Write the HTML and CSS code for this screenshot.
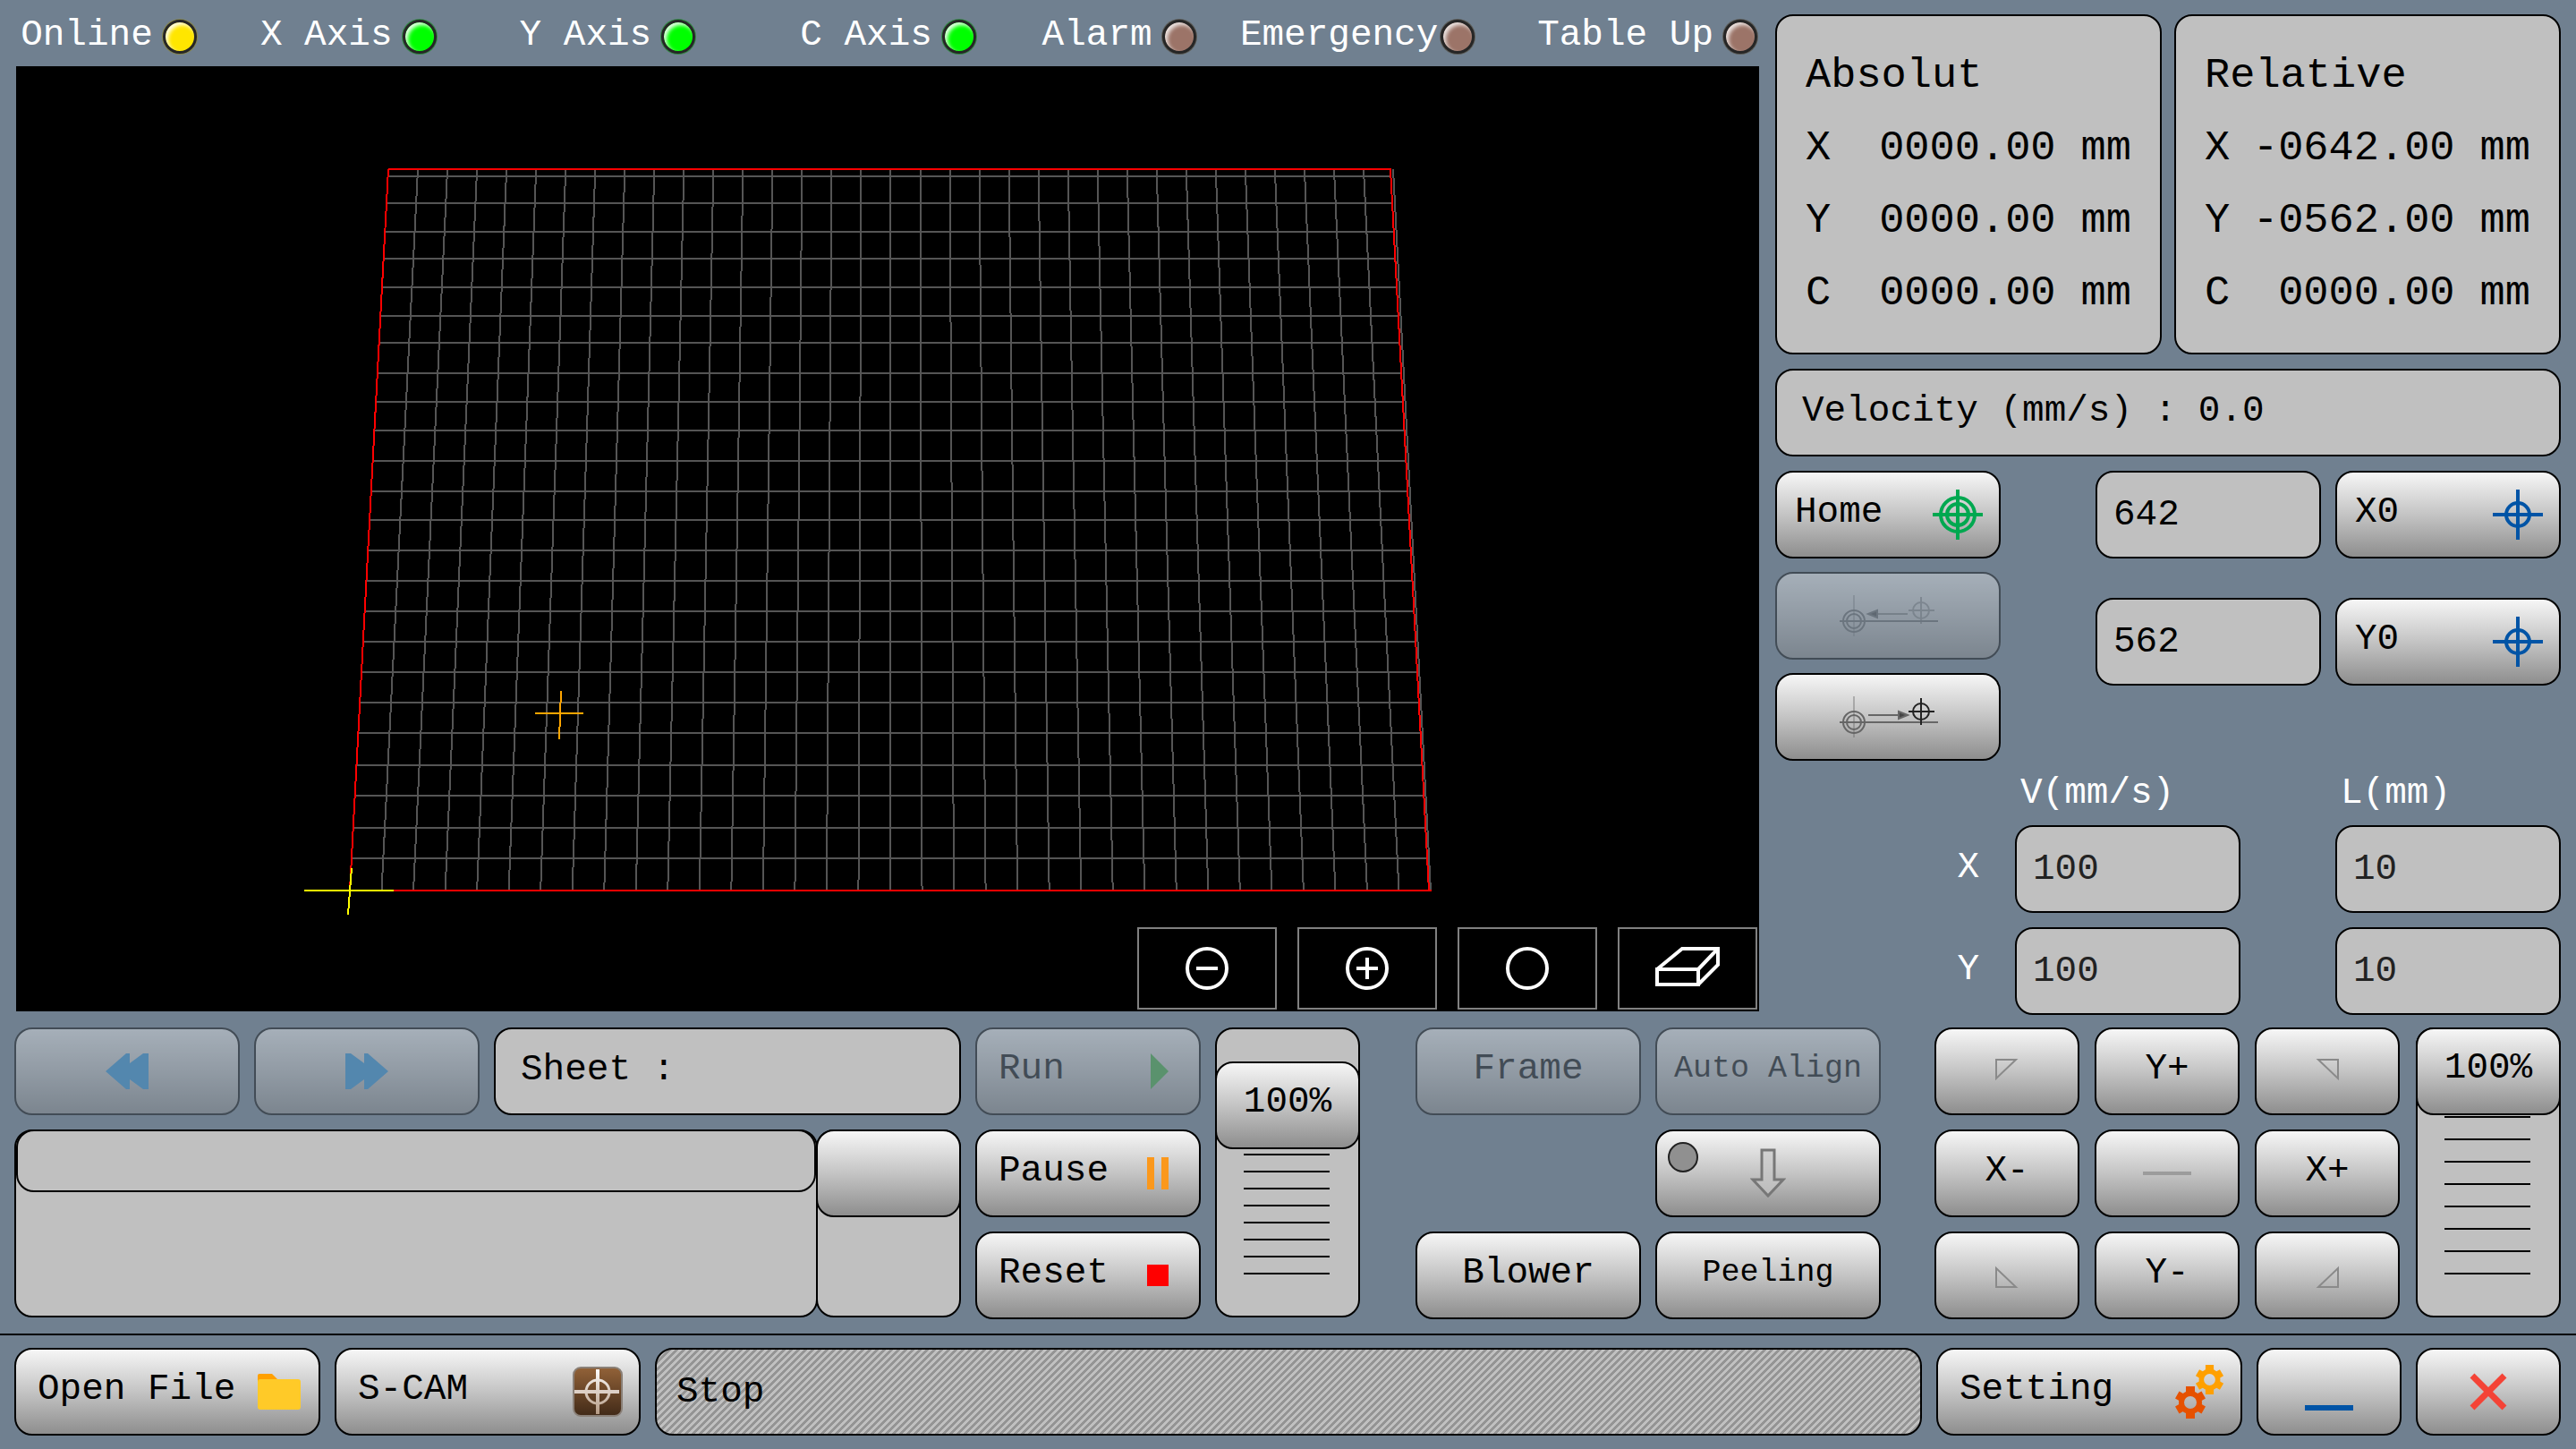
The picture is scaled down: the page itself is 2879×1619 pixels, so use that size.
FILE: index.html
```
<!DOCTYPE html>
<html lang="en">

<head>
	<meta charset="UTF-8">
	<meta name="viewport" content="width=device-width, initial-scale=1.0">
	<title>Cutter Control</title>
	<link rel="stylesheet" href="styles.css">
</head>

<body>
	<!-- shared icons -->
	<svg class="defs" aria-hidden="true">
		<symbol id="target" viewBox="0 0 56 56">
			<path d="M28 0V56M0 28H56" />
			<circle cx="28" cy="28" r="13" />
		</symbol>
		<symbol id="gear" viewBox="-18 -18 36 36">
			<circle r="10" fill="none" stroke="currentColor" stroke-width="6" />
			<path d="M0-18V-10M0 18V10" stroke="currentColor" stroke-width="10" />
			<path d="M0-17V-10M0 17V10" stroke="currentColor" stroke-width="9" transform="rotate(60)" />
			<path d="M0-17V-10M0 17V10" stroke="currentColor" stroke-width="9" transform="rotate(120)" />
		</symbol>
	</svg>

	<main class="main">
		<section class="left">
			<div class="status">
				<div class="status-item"><span>Online</span><i class="led yellow"></i></div>
				<div class="status-item"><span>X Axis</span><i class="led green"></i></div>
				<div class="status-item"><span>Y Axis</span><i class="led green"></i></div>
				<div class="status-item"><span>C Axis</span><i class="led green"></i></div>
				<div class="status-item"><span>Alarm</span><i class="led"></i></div>
				<div class="status-item tight"><span>Emergency</span><i class="led"></i></div>
				<div class="status-item"><span>Table Up</span><i class="led"></i></div>
			</div>
			<div class="view">
				<svg class="table-view" viewBox="0 0 1948 1056" aria-label="Cutting table">
					<path id="gridLines" stroke="#555" />
					<path d="M416 115H1536L1579 921" stroke="#f00" />
					<path d="M416 115L373 921H1582" stroke="#f00" />
					<path d="M322 921H422M375 896L371 948" stroke="#ff0" />
					<path d="M580 723H634M609 698L607 752" stroke="#ffa500" />
				</svg>
				<div class="tools">
					<button type="button" class="tool" aria-label="Zoom out">
						<svg width="48" height="48" viewBox="0 0 48 48"><circle cx="24" cy="24" r="22" /><path d="M12 24H36" /></svg>
					</button>
					<button type="button" class="tool" aria-label="Zoom in">
						<svg width="48" height="48" viewBox="0 0 48 48"><circle cx="24" cy="24" r="22" /><path d="M12 24H36M24 12V36" /></svg>
					</button>
					<button type="button" class="tool" aria-label="Fit">
						<svg width="48" height="48" viewBox="0 0 48 48"><circle cx="24" cy="24" r="22" /></svg>
					</button>
					<button type="button" class="tool" aria-label="Erase">
						<svg width="72" height="48" viewBox="0 0 72 48"><path d="M2 25H48V42H2ZM2 25L30 2H70L48 25M70 2V20L48 42" /></svg>
					</button>
				</div>
			</div>
		</section>

		<section class="right">
			<div class="readouts">
				<table class="panel readout">
					<caption>Absolut</caption>
					<tr><th>X</th><td>0000.00</td><td class="unit">mm</td></tr>
					<tr><th>Y</th><td>0000.00</td><td class="unit">mm</td></tr>
					<tr><th>C</th><td>0000.00</td><td class="unit">mm</td></tr>
				</table>
				<table class="panel readout">
					<caption>Relative</caption>
					<tr><th>X</th><td>-0642.00</td><td class="unit">mm</td></tr>
					<tr><th>Y</th><td>-0562.00</td><td class="unit">mm</td></tr>
					<tr><th>C</th><td>0000.00</td><td class="unit">mm</td></tr>
				</table>
			</div>
			<div class="panel info">Velocity (mm/s) : 0.0</div>

			<div class="moves">
				<div class="move-col">
					<button type="button" class="btn">
						<span>Home</span>
						<svg class="home-icon" width="56" height="56" viewBox="0 0 56 56"><path d="M28 0V56M0 28H56" /><circle cx="28" cy="28" r="19" /><circle cx="28" cy="28" r="12" /></svg>
					</button>
					<button type="button" class="btn center" disabled aria-label="Go back to origin">
						<svg class="move-icon" width="116" height="46" viewBox="-4 0 116 46">
							<path d="M16 0V46" opacity=".4" /><path d="M0 29H110" />
							<circle cx="16" cy="29" r="12" /><circle cx="16" cy="29" r="8" />
							<path d="M42 21H76" opacity=".7" /><path class="head" d="M32 21L42 17V25Z" />
							<g opacity=".6"><circle cx="91" cy="17" r="9" /><path d="M91 2V32M77 17H106" /></g>
						</svg>
					</button>
					<button type="button" class="btn center" aria-label="Go to point">
						<svg class="move-icon" width="116" height="46" viewBox="-4 0 116 46">
							<path d="M16 0V46" opacity=".4" /><path d="M0 29H110" />
							<circle cx="16" cy="29" r="12" /><circle cx="16" cy="29" r="8" />
							<path d="M32 21H66" /><path class="head" d="M76 21L66 17V25Z" />
							<g stroke="#222"><circle cx="91" cy="17" r="9" /><path d="M91 2V32M77 17H106" /></g>
						</svg>
					</button>
				</div>
				<div class="origin-col">
					<input class="field" type="text" value="642" aria-label="X origin">
					<button type="button" class="btn"><span>X0</span><svg class="set-icon" width="56" height="56"><use href="#target" /></svg></button>
					<input class="field" type="text" value="562" aria-label="Y origin">
					<button type="button" class="btn"><span>Y0</span><svg class="set-icon" width="56" height="56"><use href="#target" /></svg></button>
				</div>
			</div>

			<div class="steps">
				<span></span><span class="steps-head">V(mm/s)</span><span class="steps-head">L(mm)</span>
				<label for="vx">X</label>
				<input class="field" id="vx" type="text" value="100">
				<input class="field" type="text" value="10" aria-label="X length">
				<label for="vy">Y</label>
				<input class="field" id="vy" type="text" value="100">
				<input class="field" type="text" value="10" aria-label="Y length">
			</div>
		</section>
	</main>

	<section class="controls">
		<div class="sheet">
			<div class="sheet-top">
				<button type="button" class="btn center" disabled aria-label="Previous">
					<svg width="48" height="40" viewBox="0 0 48 40"><path d="M0 20L23 0H27V11L42 0H48V40H42L27 29V40H23Z" fill="#2a92dc" /></svg>
				</button>
				<button type="button" class="btn center" disabled aria-label="Next">
					<svg width="48" height="40" viewBox="0 0 48 40"><path d="M48 20L25 0H21V11L6 0H0V40H6L21 29V40H25Z" fill="#2a92dc" /></svg>
				</button>
				<div class="panel info">Sheet :</div>
			</div>
			<div class="sheet-list">
				<div class="panel list"><div class="panel list-row"></div></div>
				<div class="panel slider scroll">
					<input type="range" min="0" max="100" value="100" aria-label="Scroll">
				</div>
			</div>
		</div>

		<div class="run-col">
			<button type="button" class="btn" disabled><span>Run</span><svg width="24" height="40" viewBox="0 0 24 40"><path d="M4 0L24 20L4 40Z" fill="#3aae3a" /></svg></button>
			<button type="button" class="btn"><span>Pause</span><svg width="24" height="36" viewBox="0 0 24 36"><path d="M0 0H8V36H0ZM16 0H24V36H16Z" fill="#fb981c" /></svg></button>
			<button type="button" class="btn"><span>Reset</span><svg width="24" height="24" viewBox="0 0 24 24"><path d="M0 0H24V24H0Z" fill="#f00" /></svg></button>
		</div>

		<div class="panel slider work">
			<div class="ticks"></div>
			<input id="workSpeed" type="range" min="0" max="120" value="100" aria-label="Work speed">
			<output for="workSpeed">100%</output>
		</div>

		<div class="actions">
			<button type="button" class="btn center" disabled><span>Frame</span></button>
			<button type="button" class="btn center small" disabled><span>Auto Align</span></button>
			<span></span>
			<button type="button" class="btn center" aria-label="Tool down">
				<i class="lamp"></i>
				<svg width="40" height="56" viewBox="0 0 40 56"><path d="M13 2H27V35H37L20 53L3 35H13Z" fill="#c8c8c8" fill-opacity=".6" stroke="#777" stroke-width="3" /></svg>
			</button>
			<button type="button" class="btn center"><span>Blower</span></button>
			<button type="button" class="btn center small"><span>Peeling</span></button>
		</div>

		<div class="jog">
			<button type="button" class="btn center" aria-label="X- Y+"><svg class="corner" width="28" height="28"><path d="M2 1H24L2 22Z" /></svg></button>
			<button type="button" class="btn center"><span>Y+</span></button>
			<button type="button" class="btn center" aria-label="X+ Y+"><svg class="corner" width="28" height="28"><path d="M26 1H4L26 22Z" /></svg></button>
			<button type="button" class="btn center"><span>X-</span></button>
			<button type="button" class="btn center" aria-label="Centre"><svg width="54" height="4"><path d="M0 0H54V4H0Z" fill="#9c9c9c" /></svg></button>
			<button type="button" class="btn center"><span>X+</span></button>
			<button type="button" class="btn center" aria-label="X- Y-"><svg class="corner" width="28" height="28"><path d="M2 6V27H24Z" /></svg></button>
			<button type="button" class="btn center"><span>Y-</span></button>
			<button type="button" class="btn center" aria-label="X+ Y-"><svg class="corner" width="28" height="28"><path d="M26 6V27H4Z" /></svg></button>
		</div>

		<div class="panel slider travel">
			<div class="ticks"></div>
			<input id="travelSpeed" type="range" min="0" max="100" value="100" aria-label="Travel speed">
			<output for="travelSpeed">100%</output>
		</div>
	</section>

	<footer class="footer">
		<button type="button" class="btn">
			<span>Open File</span>
			<svg width="50" height="40" viewBox="0 0 50 40"><path d="M0 2Q0 0 2 0H16L22 6V20H0Z" fill="#ffa000" /><rect y="6" width="48" height="34" rx="3" fill="#ffca28" /></svg>
		</button>
		<button type="button" class="btn">
			<span>S-CAM</span>
			<svg width="56" height="56" viewBox="0 0 56 56">
				<defs>
					<linearGradient id="brown" x2="0" y2="1"><stop stop-color="#926238" /><stop offset="1" stop-color="#412a18" /></linearGradient>
					<linearGradient id="cream" gradientUnits="userSpaceOnUse" x1="0" y1="2" x2="0" y2="54"><stop stop-color="#fff" /><stop offset="1" stop-color="#b39780" /></linearGradient>
				</defs>
				<rect x="1" y="1" width="54" height="54" rx="8" fill="url(#brown)" stroke="#8a8078" stroke-width="2" />
				<g fill="none" stroke="url(#cream)"><path d="M28 3V53" stroke-width="4" /><circle cx="28" cy="28" r="13" stroke-width="3" /></g>
				<path d="M2 28H52" stroke="#ddd0c6" stroke-width="4" />
			</svg>
		</button>
		<div class="panel message">Stop</div>
		<button type="button" class="btn">
			<span>Setting</span>
			<svg width="56" height="60" viewBox="0 0 56 60">
				<use href="#gear" x="23" y="0" width="33" height="33" color="#ffa000" />
				<use href="#gear" x="0" y="24" width="36" height="36" color="#e65100" />
			</svg>
		</button>
		<button type="button" class="btn center" aria-label="Minimize"><svg width="54" height="42" viewBox="0 0 54 42"><path d="M0 36H54V42H0Z" fill="#0054a6" /></svg></button>
		<button type="button" class="btn center" aria-label="Close"><svg width="44" height="44" viewBox="0 0 44 44"><path d="M4 4L40 40M40 4L4 40" stroke="#f44336" stroke-width="7" /></svg></button>
	</footer>

	<script>
		// table corners in view coordinates
		const top0 = 115, bottom0 = 921;
		const cols = 34;
		const rows = [123, 153, 185, 215, 247, 279, 309, 343, 375, 407, 441, 475, 507, 541, 575, 609, 643, 677, 711, 745, 781, 815, 851, 885];

		// x on the slanted side that runs from a (top) to b (bottom)
		function sideX(a, b, y) {
			return a + (b - a) * (y - top0) / (bottom0 - top0);
		}

		let d = '';
		for (let i = 1; i <= cols; i++) {
			d += 'M' + (416 + i * 1123 / cols) + ' ' + top0 + 'L' + (373 + i * 1208 / cols) + ' ' + bottom0;
		}
		rows.forEach(function (y) {
			d += 'M' + sideX(416, 373, y) + ' ' + y + 'H' + sideX(1536, 1579, y);
		});
		document.getElementById('gridLines').setAttribute('d', d);
	</script>
</body>

</html>
```
FILE: styles.css
```
* {
	margin: 0;
	padding: 0;
	box-sizing: border-box;
}

body {
	display: flex;
	flex-direction: column;
	min-height: 100vh;
	font-family: "Courier New", "Liberation Mono", monospace;
	font-size: 41px;
	color: #000;
	background: #708090;
}

button,
input {
	font: inherit;
	color: inherit;
}

.defs {
	display: none;
}

.panel {
	border: 2px solid #000;
	border-radius: 20px;
	background: #c0c0c0;
}

.btn {
	position: relative;
	display: flex;
	align-items: center;
	justify-content: space-between;
	min-width: 0;
	height: 98px;
	padding: 0 18px 0 20px;
	border: 2px solid #000;
	border-radius: 20px;
	background: linear-gradient(#f6f6f6, #c4c4c4 50%, #8e8e8e);
	white-space: nowrap;
	cursor: pointer;
}

.btn span {
	padding-bottom: 6px;
}

.btn.center {
	justify-content: center;
	padding: 0;
}

.btn.small {
	font-size: 35px;
}

.btn:disabled {
	opacity: .4;
	cursor: default;
}

.field {
	width: 100%;
	height: 98px;
	padding: 0 18px;
	border: 2px solid #000;
	border-radius: 20px;
	background: #c0c0c0;
	outline: none;
}

.info {
	height: 98px;
	padding: 0 28px;
	line-height: 90px;
}

/* top part */
.main {
	display: grid;
	grid-template-columns: 1948fr 878fr;
	gap: 18px;
	flex: 1;
	padding: 0 17px 0 18px;
}

.left {
	display: flex;
	flex-direction: column;
	padding-bottom: 4px;
}

.status {
	display: grid;
	grid-template-columns: 202fr 268fr 290fr 314fr 246fr 312fr 316fr;
	height: 74px;
	padding: 8px 2px 0 0;
	color: #fff;
}

.status-item {
	display: flex;
	align-items: center;
	justify-content: flex-end;
	gap: 11px;
}

.status-item.tight {
	gap: 3px;
}

.status-item span {
	padding-bottom: 4px;
}

.led {
	width: 38px;
	height: 38px;
	border: 3px solid #262626;
	border-radius: 50%;
	background: #9c7468;
	box-shadow: inset 3px 3px 4px rgba(255, 255, 255, .8), 0 0 0 1px #5c5c58;
}

.led.yellow {
	background: #ffe600;
	box-shadow: inset 3px 3px 4px rgba(255, 255, 255, .9), 0 0 0 1px #85854e;
}

.led.green {
	background: #0f0;
	box-shadow: inset 3px 3px 4px rgba(255, 255, 255, .9), 0 0 0 1px #358a48;
}

.view {
	position: relative;
	flex: 1;
	background: #000;
}

.table-view {
	display: block;
	width: 100%;
	height: 100%;
	fill: none;
	stroke-width: 2;
	shape-rendering: crispEdges;
}

.tools {
	position: absolute;
	right: 2px;
	bottom: 2px;
	display: flex;
	gap: 23px;
}

.tool {
	display: flex;
	align-items: center;
	justify-content: center;
	width: 156px;
	height: 92px;
	border: 2px solid #808080;
	background: #000;
	cursor: pointer;
}

.tool svg {
	fill: none;
	stroke: #fff;
	stroke-width: 4;
}

.right {
	display: flex;
	flex-direction: column;
	gap: 16px;
	padding-top: 16px;
}

.readouts {
	display: grid;
	grid-template-columns: 1fr 1fr;
	gap: 14px;
}

.readout {
	display: block;
	padding: 26px 32px;
	font-size: 47px;
	line-height: 81px;
}

.readout caption {
	display: block;
	text-align: left;
}

.readout tbody {
	display: block;
}

.readout tr {
	display: flex;
}

.readout th {
	flex: 1;
	font-weight: normal;
	text-align: left;
}

.readout .unit {
	padding-left: 28px;
}

.moves {
	display: grid;
	grid-template-columns: 252fr 520fr;
	gap: 106px;
}

.move-col {
	display: grid;
	gap: 15px;
}

.origin-col {
	display: grid;
	grid-template-columns: 1fr 1fr;
	align-content: start;
	gap: 44px 16px;
}

.home-icon,
.set-icon,
.move-icon,
.corner {
	fill: none;
	stroke-width: 4;
}

.home-icon {
	stroke: #00a850;
}

.set-icon {
	stroke: #0054a6;
}

.move-icon {
	stroke: #666;
	stroke-width: 2;
}

.move-icon .head {
	fill: #444;
}

.corner {
	stroke: #8a8a8a;
	stroke-width: 2;
}

.steps {
	display: grid;
	grid-template-columns: 162fr 252fr 252fr;
	gap: 16px 106px;
	align-items: center;
	margin-top: -16px;
	color: #fff;
}

.steps label {
	text-align: right;
	margin-right: -66px;
	padding-bottom: 4px;
}

.steps-head {
	height: 56px;
	padding-left: 6px;
	line-height: 72px;
}

.steps .field {
	color: #222;
}

/* bottom part */
.controls {
	display: grid;
	grid-template-columns: 1058fr 252fr 162fr 566fr 564fr 164fr;
	gap: 16px;
	padding: 14px 17px 16px 16px;
}

.controls > * {
	min-width: 0;
}

.sheet-top {
	display: grid;
	grid-template-columns: 252fr 252fr 522fr;
	gap: 16px;
}

.sheet-list {
	display: flex;
	height: 210px;
	margin-top: 16px;
}

.list {
	flex: 1;
}

.list-row {
	height: 70px;
	margin-top: -2px;
}

.run-col {
	display: grid;
	gap: 16px;
}

.run-col .btn {
	padding: 0 34px 0 24px;
}

.slider {
	position: relative;
	height: 324px;
}

.slider input {
	position: absolute;
	top: -2px;
	left: -2px;
	width: calc(100% + 4px);
	height: calc(100% + 4px);
	appearance: none;
	background: none;
	writing-mode: vertical-lr;
	direction: rtl;
}

.slider input::-webkit-slider-thumb {
	appearance: none;
	width: 162px;
	height: 98px;
	border: 2px solid #000;
	border-radius: 20px;
	background: linear-gradient(#f6f6f6, #c4c4c4 50%, #8e8e8e);
}

.slider output {
	position: absolute;
	top: -2px;
	left: 0;
	right: 0;
	line-height: 90px;
	text-align: center;
	pointer-events: none;
}

.work output {
	top: 36px;
}

.ticks {
	position: absolute;
	left: 30px;
	right: 32px;
	bottom: 46px;
	height: 135px;
	background: repeating-linear-gradient(to top, #000 0 2px, transparent 2px 19px);
}

.travel {
	margin-left: 2px;
}

.travel .ticks {
	height: 177px;
	background: repeating-linear-gradient(to top, #000 0 2px, transparent 2px 25px);
}

.slider.scroll {
	width: 162px;
	height: auto;
	margin-left: -2px;
}

.actions {
	display: grid;
	grid-template-columns: 1fr 1fr;
	gap: 16px;
	padding-left: 46px;
}

.lamp {
	position: absolute;
	top: 12px;
	left: 12px;
	width: 34px;
	height: 34px;
	border: 2px solid #222;
	border-radius: 50%;
	background: #909090;
}

.jog {
	display: grid;
	grid-template-columns: 1fr 1fr 1fr;
	gap: 16px 17px;
	padding-left: 44px;
}

.footer {
	display: grid;
	grid-template-columns: 342fr 342fr 1416fr 342fr 162fr 162fr;
	gap: 16px;
	padding: 14px 17px 15px 16px;
	border-top: 2px solid #000;
}

.footer .btn {
	padding-left: 24px;
}

.footer .btn.center {
	padding-left: 0;
}

.message {
	padding: 0 22px;
	line-height: 94px;
	background: linear-gradient(135deg, #c0c0c0 25%, #949494 25% 50%, #c0c0c0 50% 75%, #949494 75%) 0 0 / 8px 8px;
}
```
